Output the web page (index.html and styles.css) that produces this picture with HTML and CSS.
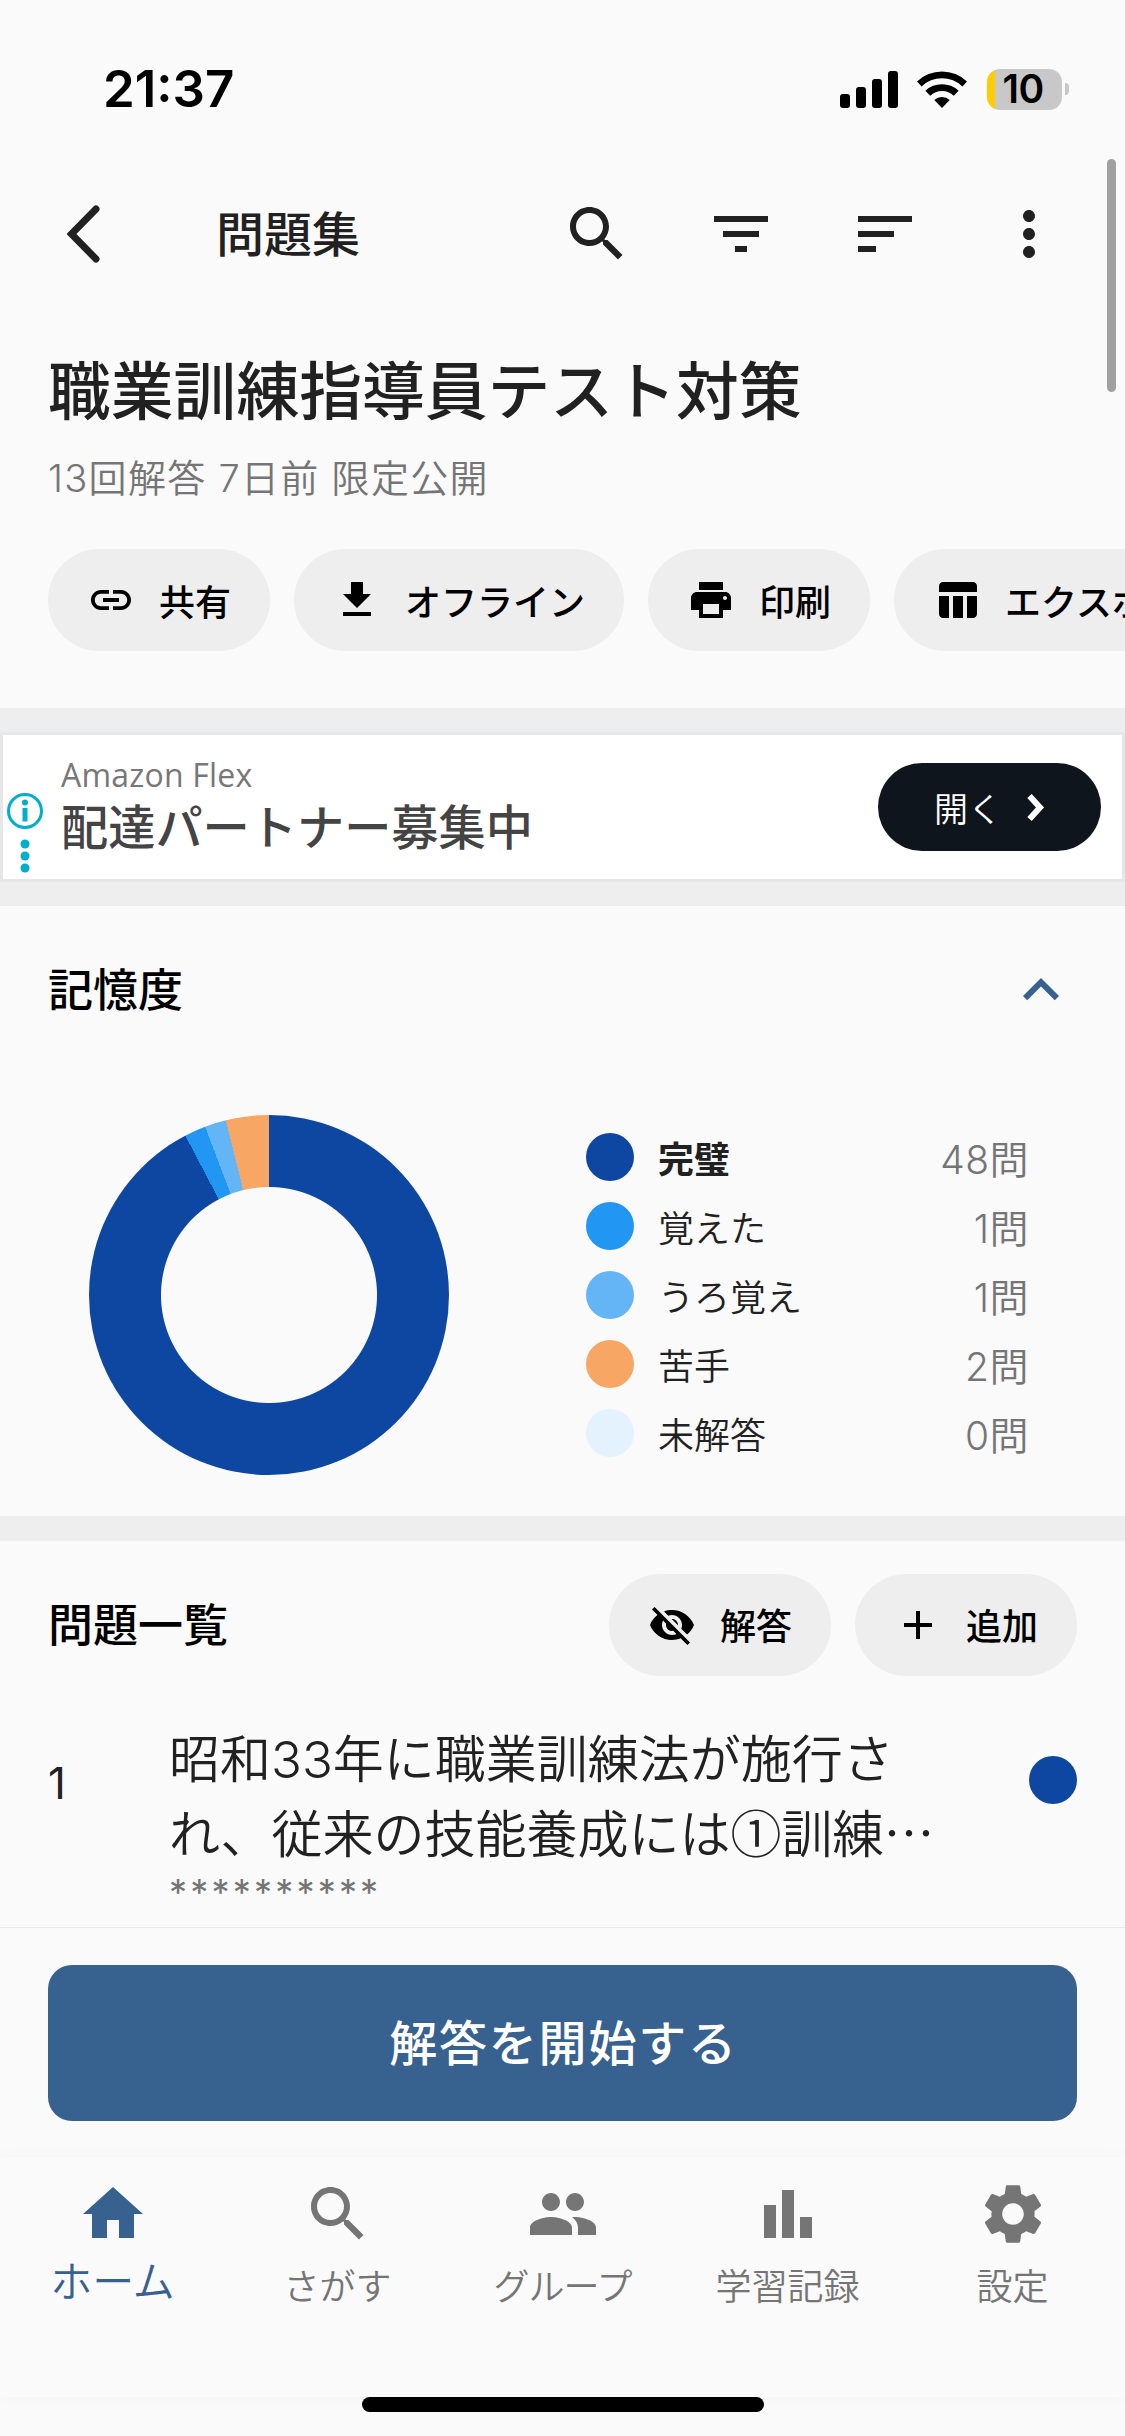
FILE: index.html
```html
<!DOCTYPE html>
<html lang="ja">
<head>
    <meta charset="UTF-8">
    <meta name="viewport" content="width=device-width, initial-scale=1.0">
    <title>問題集</title>
    <link rel="stylesheet" href="styles.css">
</head>
<body>

<div class="status-bar">
    <span class="clock">21:37</span>
    <div class="status-icons">
        <svg class="signal" width="58" height="37" viewBox="0 0 58 37">
            <rect x="0" y="23" width="10" height="14" rx="3"/>
            <rect x="16" y="16" width="10" height="21" rx="3"/>
            <rect x="32" y="8" width="10" height="29" rx="3"/>
            <rect x="48" y="0" width="10" height="37" rx="3"/>
        </svg>
        <svg class="wifi" width="50" height="37" viewBox="0 0 50 37">
            <path d="M0 10.5a36 36 0 0 1 50 0l-4.6 4.9a29.5 29.5 0 0 0-40.8 0z"/>
            <path d="M8.4 19.8a24 24 0 0 1 33.2 0l-4.8 5a17 17 0 0 0-23.6 0z"/>
            <path d="M17.3 29a11.5 11.5 0 0 1 15.4 0L25 37z"/>
        </svg>
        <div class="battery"><span>10</span></div>
        <div class="battery-tip"></div>
    </div>
</div>

<header class="app-bar">
    <svg class="back" width="34" height="58" viewBox="0 0 34 58"><path d="M29 4L4.500 29L29 54"/></svg>
    <h1>問題集</h1>
    <div class="actions">
        <svg class="icon" viewBox="0 0 24 24"><path d="M15.500 14h-.79l-.28-.27C15.410 12.590 16 11.110 16 9.500 16 5.910 13.090 3 9.500 3S3 5.910 3 9.500 5.910 16 9.500 16c1.610 0 3.090-.59 4.230-1.570l.27.28v.79l5 4.990L20.490 19l-4.990-5zm-6 0C7.010 14 5 11.990 5 9.500S7.010 5 9.500 5 14 7.010 14 9.500 11.990 14 9.500 14z"/></svg>
        <svg class="icon" viewBox="0 0 24 24"><path d="M10 18h4v-2h-4v2zM3 6v2h18V6H3zm3 7h12v-2H6v2z"/></svg>
        <svg class="icon" viewBox="0 0 24 24"><path d="M3 18h6v-2H3v2zM3 6v2h18V6H3zm0 7h12v-2H3v2z"/></svg>
        <svg class="icon" viewBox="0 0 24 24"><path d="M12 8c1.100 0 2-.9 2-2s-.9-2-2-2-2 .9-2 2 .9 2 2 2zm0 2c-1.100 0-2 .9-2 2s.9 2 2 2 2-.9 2-2-.9-2-2-2zm0 6c-1.100 0-2 .9-2 2s.9 2 2 2 2-.9 2-2-.9-2-2-2z"/></svg>
    </div>
</header>
<div class="scrollbar"></div>

<section class="summary">
    <h2>職業訓練指導員テスト対策</h2>
    <p>13回解答 7日前 限定公開</p>
    <div class="chips">
        <button class="chip">
            <svg viewBox="0 0 24 24"><path d="M3.900 12c0-1.710 1.390-3.100 3.100-3.100h4V7H7c-2.760 0-5 2.240-5 5s2.240 5 5 5h4v-1.900H7c-1.710 0-3.100-1.390-3.100-3.100zM8 13h8v-2H8v2zm9-6h-4v1.900h4c1.710 0 3.100 1.390 3.100 3.100s-1.390 3.100-3.100 3.100h-4V17h4c2.760 0 5-2.240 5-5s-2.240-5-5-5z"/></svg>
            <span>共有</span>
        </button>
        <button class="chip">
            <svg viewBox="0 0 24 24"><path d="M19 9h-4V3H9v6H5l7 7 7-7zM5 18v2h14v-2H5z"/></svg>
            <span>オフライン</span>
        </button>
        <button class="chip">
            <svg viewBox="0 0 24 24"><path d="M19 8H5c-1.660 0-3 1.340-3 3v6h4v4h12v-4h4v-6c0-1.660-1.340-3-3-3zm-3 11H8v-5h8v5zm3-7c-.55 0-1-.45-1-1s.45-1 1-1 1 .45 1 1-.45 1-1 1zm-1-9H6v4h12V3z"/></svg>
            <span>印刷</span>
        </button>
        <button class="chip">
            <svg viewBox="0 0 24 24"><path d="M10 10.020h5V21h-5zM17 21h3c1.100 0 2-.9 2-2v-9h-5v11zm3-18H5c-1.100 0-2 .9-2 2v3h19V5c0-1.100-.9-2-2-2zM3 19c0 1.100.9 2 2 2h3V10H3v9z"/></svg>
            <span>エクスポート</span>
        </button>
    </div>
</section>

<div class="ad-area">
    <div class="ad">
        <svg class="ad-info" width="38" height="84" viewBox="0 0 38 84">
            <circle cx="19" cy="19" r="16.500" fill="none" stroke="#00aecd" stroke-width="3"/>
            <circle cx="19" cy="10.500" r="3"/>
            <rect x="16.500" y="16" width="5" height="13.500"/>
            <circle cx="19" cy="52" r="4.500"/>
            <circle cx="19" cy="64" r="4.500"/>
            <circle cx="19" cy="76" r="4.500"/>
        </svg>
        <div class="ad-text">
            <span class="advertiser">Amazon Flex</span>
            <span class="ad-title">配達パートナー募集中</span>
        </div>
        <a class="ad-button">開く
            <svg width="19" height="29" viewBox="0 0 19 29"><path d="M3.500 3L14 14.500L3.500 26"/></svg>
        </a>
    </div>
</div>

<section class="memory">
    <div class="section-head">
        <h3>記憶度</h3>
        <svg class="icon" viewBox="0 0 24 24"><path d="M12 8l-6 6 1.410 1.410L12 10.830l4.590 4.580L18 14z"/></svg>
    </div>
    <div class="memory-body">
        <div class="donut"></div>
        <ul class="legend">
            <li><i class="dot perfect"></i><b>完璧</b><span>48問</span></li>
            <li><i class="dot learned"></i>覚えた<span>1問</span></li>
            <li><i class="dot vague"></i>うろ覚え<span>1問</span></li>
            <li><i class="dot weak"></i>苦手<span>2問</span></li>
            <li><i class="dot unanswered"></i>未解答<span>0問</span></li>
        </ul>
    </div>
</section>

<section class="questions">
    <div class="section-head">
        <h3>問題一覧</h3>
        <div class="chips">
            <button class="chip">
                <svg viewBox="0 0 24 24"><path d="M12 7c2.760 0 5 2.240 5 5 0 .65-.13 1.260-.36 1.830l2.920 2.920c1.510-1.260 2.700-2.890 3.430-4.750-1.730-4.390-6-7.500-11-7.500-1.400 0-2.740.25-3.980.7l2.160 2.160C10.740 7.130 11.350 7 12 7zM2 4.270l2.280 2.280.46.46C3.080 8.300 1.780 10.020 1 12c1.730 4.390 6 7.500 11 7.500 1.550 0 3.030-.3 4.380-.84l.42.42L19.730 22 21 20.730 3.270 3 2 4.270zM7.530 9.800l1.550 1.550c-.05.21-.08.43-.08.65 0 1.660 1.340 3 3 3 .22 0 .44-.03.65-.08l1.550 1.550c-.67.33-1.410.53-2.200.53-2.760 0-5-2.240-5-5 0-.79.2-1.530.53-2.200zm4.310-.78l3.150 3.150.02-.16c0-1.660-1.340-3-3-3l-.17.01z"/></svg>
                <span>解答</span>
            </button>
            <button class="chip">
                <svg viewBox="0 0 24 24"><path d="M19 13h-6v6h-2v-6H5v-2h6V5h2v6h6v2z"/></svg>
                <span>追加</span>
            </button>
        </div>
    </div>
    <div class="question">
        <span class="number">1</span>
        <div class="question-text">
            <p>昭和33年に職業訓練法が施行さ<br>れ、従来の技能養成には<span class="cjk">①</span>訓練<span class="cjk">…</span></p>
            <small>**********</small>
        </div>
        <i class="dot perfect"></i>
    </div>
</section>

<div class="start-area">
    <button class="start">解答を開始する</button>
</div>

<nav class="tabs">
    <a class="active">
        <svg class="icon" viewBox="0 0 24 24"><path d="M10 20v-6h4v6h5v-8h3L12 3 2 12h3v8z"/></svg>
        ホーム
    </a>
    <a>
        <svg class="icon" viewBox="0 0 24 24"><path d="M15.500 14h-.79l-.28-.27C15.410 12.590 16 11.110 16 9.500 16 5.910 13.090 3 9.500 3S3 5.910 3 9.500 5.910 16 9.500 16c1.610 0 3.090-.59 4.230-1.570l.27.28v.79l5 4.990L20.490 19l-4.990-5zm-6 0C7.010 14 5 11.990 5 9.500S7.010 5 9.500 5 14 7.010 14 9.500 11.990 14 9.500 14z"/></svg>
        さがす
    </a>
    <a>
        <svg class="icon" viewBox="0 0 24 24"><path d="M16 11c1.660 0 2.990-1.340 2.990-3S17.660 5 16 5c-1.660 0-3 1.340-3 3s1.340 3 3 3zm-8 0c1.660 0 2.990-1.340 2.990-3S9.660 5 8 5C6.340 5 5 6.340 5 8s1.340 3 3 3zm0 2c-2.330 0-7 1.170-7 3.500V19h14v-2.500c0-2.330-4.670-3.500-7-3.500zm8 0c-.29 0-.62.02-.97.05 1.160.84 1.970 1.970 1.970 3.450V19h6v-2.500c0-2.330-4.670-3.500-7-3.500z"/></svg>
        <span class="narrow">グループ</span>
    </a>
    <a>
        <svg class="icon" viewBox="0 0 24 24"><path d="M4 9h4v11H4zM16 13h4v7h-4zM10 4h4v16h-4z"/></svg>
        学習記録
    </a>
    <a>
        <svg class="icon" viewBox="0 0 24 24"><path d="M19.140 12.940c.04-.3.06-.61.06-.94 0-.32-.02-.64-.07-.94l2.030-1.580c.18-.14.23-.41.12-.61l-1.920-3.320c-.12-.22-.37-.29-.59-.22l-2.390.96c-.5-.38-1.030-.7-1.620-.94l-.36-2.540c-.04-.24-.24-.41-.48-.41h-3.840c-.24 0-.43.17-.47.41l-.36 2.540c-.59.24-1.130.57-1.620.94l-2.390-.96c-.22-.08-.47 0-.59.22L2.740 8.870c-.12.21-.08.47.12.61l2.030 1.580c-.05.3-.09.63-.09.94s.02.64.07.94l-2.030 1.580c-.18.14-.23.41-.12.61l1.920 3.320c.12.22.37.29.59.22l2.390-.96c.5.38 1.030.7 1.620.94l.36 2.540c.05.24.24.41.48.41h3.840c.24 0 .44-.17.47-.41l.36-2.540c.59-.24 1.130-.56 1.620-.94l2.390.96c.22.08.47 0 .59-.22l1.920-3.320c.12-.22.07-.47-.12-.61l-2.010-1.580zM12 15.600c-1.980 0-3.600-1.620-3.600-3.600s1.620-3.600 3.600-3.600 3.600 1.620 3.600 3.600-1.620 3.600-3.600 3.600z"/></svg>
        設定
    </a>
</nav>
<div class="home-indicator"></div>

</body>
</html>
```
FILE: styles.css
```css
* {
    box-sizing: border-box;
    margin: 0;
    padding: 0;
}
body {
    width: 1125px;
    height: 2436px;
    overflow: hidden;
    display: flex;
    flex-direction: column;
    background-color: #fafafa;
    color: #212121;
    font-family: Inter, "Noto Sans CJK JP", sans-serif;
    font-weight: 350;
}
svg {
    display: block;
    flex: none;
    fill: currentColor;
}
button {
    border: none;
    font: inherit;
}
.icon {
    width: 72px;
    height: 72px;
}

/* status bar */
.status-bar {
    height: 162px;
    padding: 16px 56px 0 103px;
    display: flex;
    align-items: center;
    justify-content: space-between;
    color: #000;
}
.clock {
    padding-bottom: 1px;
    font-size: 51px;
    font-weight: 600;
}
.status-icons {
    display: flex;
    align-items: center;
}
.wifi {
    margin-left: 19px;
}
.battery {
    width: 75px;
    height: 41px;
    margin-left: 20px;
    padding-right: 3px;
    border-radius: 13px;
    background: linear-gradient(90deg, #ffcc00 8px, #c8c8c8 8px);
    font-size: 39px;
    font-weight: 600;
    line-height: 40px;
    letter-spacing: -0.5px;
    text-align: center;
}
.battery-tip {
    width: 4px;
    height: 12px;
    margin-left: 3px;
    border-radius: 0 4px 4px 0;
    background-color: #c8c8c8;
}

/* app bar */
.app-bar {
    height: 144px;
    padding: 0 24px 0 67px;
    display: flex;
    align-items: center;
}
.back {
    fill: none;
    stroke: #212121;
    stroke-width: 7px;
    stroke-linecap: round;
}
.app-bar h1 {
    margin-left: 115px;
    padding-bottom: 6px;
    font-size: 48px;
    font-weight: 500;
}
.actions {
    display: flex;
    gap: 72px;
    margin-left: auto;
    margin-right: 36px;
}
.scrollbar {
    position: absolute;
    top: 159px;
    left: 1107px;
    width: 9px;
    height: 233px;
    border-radius: 5px;
    background-color: #a0a0a0;
}

/* summary */
.summary {
    height: 402px;
    padding: 37px 0 0 48px;
    overflow: hidden;
}
.summary h2 {
    font-size: 62.800px;
    font-weight: 500;
    line-height: 96px;
    white-space: nowrap;
}
.summary p {
    margin-top: 11px;
    color: #757575;
    font-size: 38px;
    line-height: 56px;
    letter-spacing: 1.300px;
}
.chips {
    display: flex;
    gap: 24px;
}
.summary .chips {
    margin-top: 43px;
}
.chip {
    flex: none;
    height: 102px;
    padding: 0 39px;
    display: flex;
    align-items: center;
    gap: 24px;
    border-radius: 51px;
    background-color: #eee;
    color: #000;
    font-size: 36px;
    font-weight: 500;
    white-space: nowrap;
}
.chip svg {
    width: 48px;
    height: 48px;
}
.chip span {
    padding-bottom: 1px;
}

/* ad */
.ad-area {
    height: 198px;
    padding: 24px 0;
    background-color: #eee;
}
.ad {
    height: 150px;
    padding: 0 21px 0 3px;
    display: flex;
    align-items: center;
    border: 3px solid #e6e7e8;
    background-color: #fff;
}
.ad-info {
    margin-top: 54px;
    fill: #00aecd;
}
.ad-text {
    margin-left: 17px;
    display: flex;
    flex-direction: column;
}
.advertiser {
    color: #777;
    font-family: "Open Sans", sans-serif;
    font-size: 32px;
    font-weight: 400;
    line-height: 42px;
    letter-spacing: 0.2px;
}
.ad-title {
    color: #444;
    font-size: 47.200px;
    font-weight: 500;
    line-height: 64px;
}
.ad-button {
    width: 223px;
    height: 88px;
    margin-left: auto;
    display: flex;
    align-items: center;
    justify-content: center;
    gap: 24px;
    border-radius: 44px;
    background-color: #0f151c;
    color: #fff;
    font-size: 34px;
}
.ad-button svg {
    fill: none;
    stroke: #fff;
    stroke-width: 6px;
}

/* memory chart */
.section-head {
    padding: 0 48px;
    display: flex;
    align-items: center;
    justify-content: space-between;
}
.section-head h3 {
    padding-bottom: 5px;
    color: #000;
    font-size: 45px;
    font-weight: 500;
}
.memory {
    height: 610px;
}
.memory .section-head {
    height: 168px;
    color: #37618e;
}
.memory-body {
    height: 442px;
    padding-left: 89px;
    display: flex;
}
.donut {
    width: 360px;
    height: 360px;
    margin-top: 41px;
    border-radius: 50%;
    background:
        radial-gradient(circle, #fafafa 107.500px, transparent 108.500px),
        conic-gradient(#0d47a1 0 332.300deg, #2196f3 332.300deg 339.200deg, #64b5f6 339.200deg 346.150deg, #f7a664 346.150deg);
}
.legend {
    width: 443px;
    margin: 59px 0 0 137px;
    list-style: none;
}
.legend li {
    height: 48px;
    margin-bottom: 21px;
    display: flex;
    align-items: center;
    font-size: 36px;
}
.legend b {
    font-weight: 700;
}
.legend .dot {
    margin-right: 24px;
}
.legend span {
    margin-left: auto;
    color: #757575;
    font-size: 39px;
    letter-spacing: 0.5px;
}
.dot {
    flex: none;
    width: 48px;
    height: 48px;
    border-radius: 50%;
}
.perfect {
    background-color: #0d47a1;
}
.learned {
    background-color: #2196f3;
}
.vague {
    background-color: #64b5f6;
}
.weak {
    background-color: #f7a664;
}
.unanswered {
    background-color: #e3f2fd;
}

/* question list */
.questions {
    height: 412px;
    border-top: 25px solid #eee;
    border-bottom: 1px solid #e8e8e8;
}
.questions .section-head {
    height: 167px;
}
.question {
    padding: 14px 48px 0;
    display: flex;
}
.number {
    width: 121px;
    padding-top: 33px;
    font-size: 44px;
    font-weight: 400;
    line-height: 56px;
}
.question-text p {
    font-size: 51px;
    line-height: 75px;
    white-space: nowrap;
}
.question-text .cjk {
    font-family: "Noto Sans CJK JP", sans-serif;
    line-height: 1;
}
.question-text small {
    display: block;
    color: #757575;
    font-size: 36px;
    font-weight: 400;
    line-height: 40px;
    letter-spacing: 3.200px;
}
.question .dot {
    margin: 34px 0 0 auto;
}

/* start button */
.start-area {
    height: 229px;
    padding: 37px 48px 0;
}
.start {
    width: 100%;
    height: 156px;
    padding: 0 0 6px 2px;
    border-radius: 24px;
    background-color: #37618e;
    color: #fff;
    font-size: 48px;
    font-weight: 500;
    letter-spacing: 1.800px;
}

/* bottom tabs */
.tabs {
    height: 240px;
    padding-top: 21px;
    display: flex;
    box-shadow: 0 0 18px rgba(0, 0, 0, 0.030);
}
.tabs a {
    width: 225px;
    display: flex;
    flex-direction: column;
    align-items: center;
    color: #757575;
    font-size: 36px;
    line-height: 74px;
}
.tabs .active {
    color: #37618e;
    font-size: 42px;
    line-height: 64px;
}
.tabs .narrow {
    letter-spacing: -1px;
}
.home-indicator {
    width: 402px;
    height: 15px;
    margin: 0 auto;
    border-radius: 8px;
    background-color: #000;
}
```
